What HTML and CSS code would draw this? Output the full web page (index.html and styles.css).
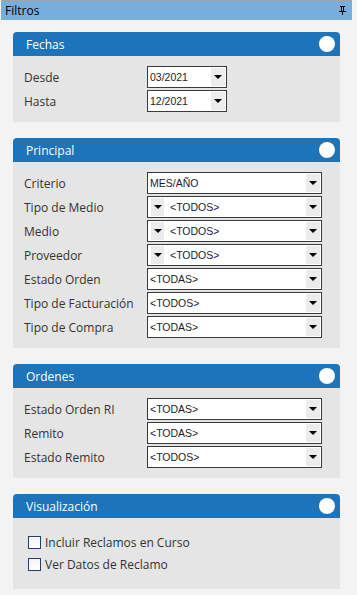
FILE: index.html
```html
<!DOCTYPE html>
<html lang="es">
<head>
<meta charset="utf-8">
<link rel="stylesheet" href="styles.css">
</head>
<body>
<div class="titlebar">
  <span class="title">Filtros</span>
  <svg class="pin" width="7" height="9" viewBox="0 0 7 9"><rect x="0" y="5" width="7" height="1" fill="#000"/><rect x="1" y="0" width="5" height="1" fill="#000"/><rect x="2" y="1" width="1" height="4" fill="#000"/><rect x="4" y="1" width="1" height="4" fill="#000"/><rect x="3" y="6" width="1" height="3" fill="#000"/></svg>
</div>
<div class="content">
  <section class="panel">
    <div class="phead"><span>Fechas</span><i class="knob"></i></div>
    <div class="pbody">
      <div class="row"><label>Desde</label><div class="sel short"><span class="val">03/2021</span><b class="arr"></b></div></div>
      <div class="row"><label>Hasta</label><div class="sel short"><span class="val">12/2021</span><b class="arr"></b></div></div>
    </div>
  </section>
  <section class="panel">
    <div class="phead"><span>Principal</span><i class="knob"></i></div>
    <div class="pbody">
      <div class="row"><label>Criterio</label><div class="sel"><span class="val">MES/AÑO</span><b class="arr"></b></div></div>
      <div class="row"><label>Tipo de Medio</label><div class="sel"><b class="arr left"></b><span class="val pad">&lt;TODOS&gt;</span><b class="arr"></b></div></div>
      <div class="row"><label>Medio</label><div class="sel"><b class="arr left"></b><span class="val pad">&lt;TODOS&gt;</span><b class="arr"></b></div></div>
      <div class="row"><label>Proveedor</label><div class="sel"><b class="arr left"></b><span class="val pad">&lt;TODOS&gt;</span><b class="arr"></b></div></div>
      <div class="row"><label>Estado Orden</label><div class="sel"><span class="val">&lt;TODAS&gt;</span><b class="arr"></b></div></div>
      <div class="row"><label>Tipo de Facturación</label><div class="sel"><span class="val">&lt;TODOS&gt;</span><b class="arr"></b></div></div>
      <div class="row"><label>Tipo de Compra</label><div class="sel"><span class="val">&lt;TODAS&gt;</span><b class="arr"></b></div></div>
    </div>
  </section>
  <section class="panel">
    <div class="phead"><span>Ordenes</span><i class="knob"></i></div>
    <div class="pbody">
      <div class="row"><label>Estado Orden RI</label><div class="sel"><span class="val">&lt;TODAS&gt;</span><b class="arr"></b></div></div>
      <div class="row"><label>Remito</label><div class="sel"><span class="val">&lt;TODAS&gt;</span><b class="arr"></b></div></div>
      <div class="row"><label>Estado Remito</label><div class="sel"><span class="val">&lt;TODOS&gt;</span><b class="arr"></b></div></div>
    </div>
  </section>
  <section class="panel">
    <div class="phead"><span>Visualización</span><i class="knob"></i></div>
    <div class="pbody checks">
      <div class="crow"><i class="cb"></i><span>Incluir Reclamos en Curso</span></div>
      <div class="crow"><i class="cb"></i><span>Ver Datos de Reclamo</span></div>
    </div>
  </section>
</div>
</body>
</html>
```
FILE: styles.css
```css
html, body { margin: 0; padding: 0; }
body {
  width: 357px;
  height: 595px;
  overflow: hidden;
  background: #f3f3f3;
  font-family: "Open Sans", "DejaVu Sans", sans-serif;
}
.titlebar {
  margin-right: 5px;
  margin-left: 1px;
  height: 19px;
  border-top: 1px solid #a3a3a3;
  background: #78aedb;
  display: flex;
  align-items: center;
  justify-content: space-between;
  padding: 0 6px 0 4px;
}
.title { font-size: 12px; color: #000; }
.pin { display: block; }
.content {
  padding: 12px 17px 0 13px;
  display: flex;
  flex-direction: column;
  gap: 16px;
}
.panel { display: flex; flex-direction: column; }
.phead {
  height: 24px;
  background: #1e74b8;
  border-radius: 4px 4px 0 0;
  display: flex;
  align-items: center;
  justify-content: space-between;
  padding: 0 5px 0 13px;
  color: #fff;
  font-size: 12px;
}
.knob {
  width: 16px;
  height: 16px;
  border-radius: 50%;
  background: radial-gradient(circle at 40% 35%, #fff 60%, #d8dde3 100%);
}
.pbody {
  background: #e5e5e5;
  padding: 10px 11px;
  display: flex;
  flex-direction: column;
  gap: 2px;
}
.row {
  display: flex;
  align-items: center;
  height: 22px;
}
.row label {
  width: 123px;
  font-size: 12px;
  color: #333;
}
.sel {
  box-sizing: border-box;
  width: 175px;
  height: 22px;
  border: 1px solid #3a3a3a;
  background: #fff;
  display: flex;
  align-items: center;
  padding: 1px 1px 1px 2px;
}
.sel.short { width: 80px; }
.val {
  flex: 1;
  font-family: "Liberation Sans", Arial, sans-serif;
  font-size: 10.5px;
  color: #1c1c2c;
  white-space: nowrap;
}
.val.pad { padding-left: 6px; }
.arr {
  width: 14px;
  height: 18px;
  background: #ececec;
  position: relative;
  flex: none;
}
.arr.left { width: 13px; margin-left: 1px; }
.arr::after {
  content: "";
  position: absolute;
  left: 3px;
  top: 7px;
  border-left: 4px solid transparent;
  border-right: 4px solid transparent;
  border-top: 4px solid #000;
}
.arr.left::after { left: 3px; }
.checks {
  padding: 13px 15px 14px 15px;
  gap: 0;
}
.crow {
  display: flex;
  align-items: center;
  height: 22px;
  font-size: 12px;
  color: #333;
}
.cb {
  box-sizing: border-box;
  width: 13px;
  height: 13px;
  border: 1px solid #24406a;
  background: linear-gradient(#f4f4f4, #ffffff);
  margin-right: 4px;
  flex: none;
}
```
